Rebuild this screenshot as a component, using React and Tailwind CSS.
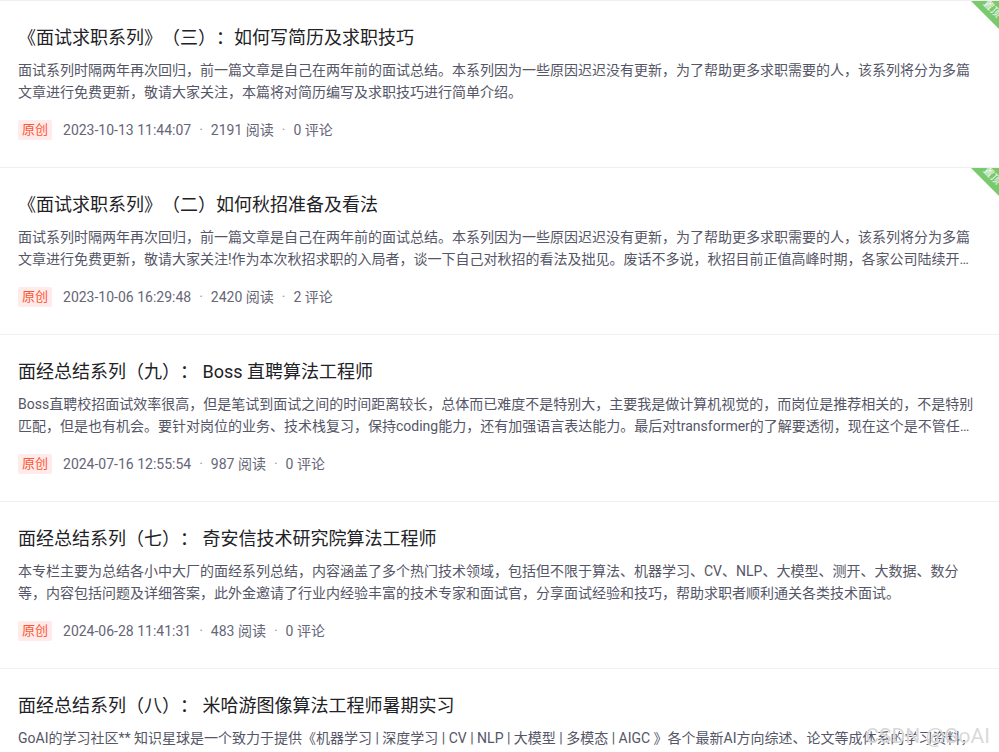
import React from "react";

const posts = [
  {
    title: "《面试求职系列》（三）：如何写简历及求职技巧",
    lines: [
      "面试系列时隔两年再次回归，前一篇文章是自己在两年前的面试总结。本系列因为一些原因迟迟没有更新，为了帮助更多求职需要的人，该系列将分为多篇",
      "文章进行免费更新，敬请大家关注，本篇将对简历编写及求职技巧进行简单介绍。",
    ],
    date: "2023-10-13 11:44:07",
    reads: 2191,
    comments: 0,
    top: true,
  },
  {
    title: "《面试求职系列》（二）如何秋招准备及看法",
    lines: [
      "面试系列时隔两年再次回归，前一篇文章是自己在两年前的面试总结。本系列因为一些原因迟迟没有更新，为了帮助更多求职需要的人，该系列将分为多篇",
      "文章进行免费更新，敬请大家关注!作为本次秋招求职的入局者，谈一下自己对秋招的看法及拙见。废话不多说，秋招目前正值高峰时期，各家公司陆续开放秋招岗位",
    ],
    date: "2023-10-06 16:29:48",
    reads: 2420,
    comments: 2,
    top: true,
  },
  {
    title: "面经总结系列（九）： Boss 直聘算法工程师",
    lines: [
      "Boss直聘校招面试效率很高，但是笔试到面试之间的时间距离较长，总体而已难度不是特别大，主要我是做计算机视觉的，而岗位是推荐相关的，不是特别",
      "匹配，但是也有机会。要针对岗位的业务、技术栈复习，保持coding能力，还有加强语言表达能力。最后对transformer的了解要透彻，现在这个是不管任何方向都会问到的",
    ],
    date: "2024-07-16 12:55:54",
    reads: 987,
    comments: 0,
  },
  {
    title: "面经总结系列（七）： 奇安信技术研究院算法工程师",
    lines: [
      "本专栏主要为总结各小中大厂的面经系列总结，内容涵盖了多个热门技术领域，包括但不限于算法、机器学习、CV、NLP、大模型、测开、大数据、数分",
      "等，内容包括问题及详细答案，此外金邀请了行业内经验丰富的技术专家和面试官，分享面试经验和技巧，帮助求职者顺利通关各类技术面试。",
    ],
    date: "2024-06-28 11:41:31",
    reads: 483,
    comments: 0,
  },
  {
    title: "面经总结系列（八）： 米哈游图像算法工程师暑期实习",
    lines: [
      "GoAI的学习社区** 知识星球是一个致力于提供《机器学习 | 深度学习 | CV | NLP | 大模型 | 多模态 | AIGC 》各个最新AI方向综述、论文等成体系的学习资料，",
      "配套详细的讲解与代码实践，欢迎大家加入学习交流。",
    ],
    date: "2024-06-20 10:12:05",
    reads: 612,
    comments: 0,
  },
];

const Post = ({ post }) => (
  <div className="relative border-t border-[#f0f0f2] pl-[18px] pr-[26px] pt-[25px] pb-[27px]">
    {post.top && (
      <div className="absolute top-0 right-0 w-[28px] h-[28px] overflow-hidden">
        <div className="absolute inset-0 bg-[#7ac96c] [clip-path:polygon(0_0,100%_0,100%_100%)]" />
        <div className="absolute top-[2px] right-[-3px] rotate-45 text-[10px] leading-[12px] text-white">
          置顶
        </div>
      </div>
    )}
    <h3 className="text-[18px] leading-[24px] text-[#222226] whitespace-nowrap">
      {post.title}
    </h3>
    <div className="mt-[9px] text-[14px] leading-[22px] text-[#555666]">
      <p className="whitespace-nowrap overflow-hidden">{post.lines[0]}</p>
      <p className="whitespace-nowrap overflow-hidden text-ellipsis">
        {post.lines[1]}
      </p>
    </div>
    <div className="mt-[17px] flex items-center h-[20px] text-[14px] text-[#666677]">
      <span className="bg-[#ffebeb] text-[#fc5531] text-[13px] leading-[20px] px-[4px] rounded-[2px]">
        原创
      </span>
      <span className="ml-[11px]">{post.date}</span>
      <span className="mx-[8px] text-[#999aaa]">·</span>
      <span>{post.reads} 阅读</span>
      <span className="mx-[8px] text-[#999aaa]">·</span>
      <span>{post.comments} 评论</span>
    </div>
  </div>
);

export default function App() {
  return (
    <div
      className="relative w-[999px] h-[752px] overflow-hidden bg-white [text-spacing-trim:space-all]"
      style={{ fontFamily: '"Roboto", "Noto Sans CJK SC", sans-serif' }}
    >
      {posts.map((p, i) => (
        <Post key={i} post={p} />
      ))}
      <div className="absolute right-[9px] bottom-[3px] text-[21px] leading-[26px] text-[#c8c8c8]/70 [text-shadow:0_0_1px_#ffffff] pointer-events-none">
        CSDN @GoAI
      </div>
    </div>
  );
}
